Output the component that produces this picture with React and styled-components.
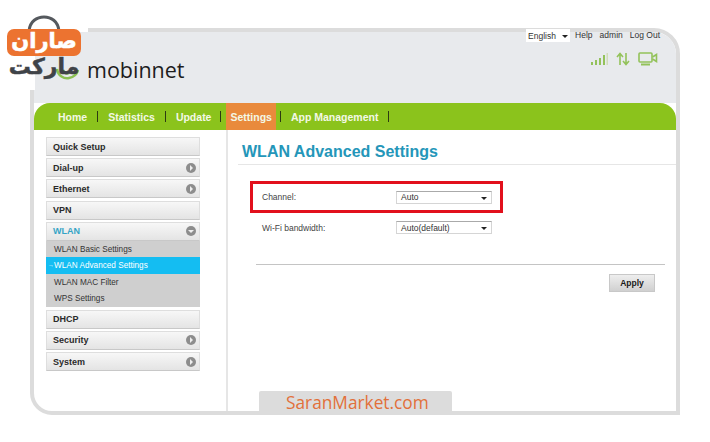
import React from 'react';
import styled, { createGlobalStyle } from 'styled-components';

const GlobalStyle = createGlobalStyle`
    html, body {
        margin: 0;
        padding: 0;
        background: #fff;
    }
    body {
        font-family: "Liberation Sans", Arial, sans-serif;
    }
`

const Page = styled.div`
    position: relative;
    width: 710px;
    height: 442px;
    padding: 28px 30px 0;
    box-sizing: border-box;
    overflow: hidden;
`

const Frame = styled.div`
    width: 650px;
    height: 387px;
    box-sizing: border-box;
    border: 4px solid #dcdcdc;
    border-radius: 0 26px 0 22px;
    display: flex;
    flex-direction: column;
    background: #fff;
`

const Header = styled.header`
    height: 71px;
    background: #e8eaed;
    border-top-right-radius: 22px;
    display: flex;
    flex-direction: column;
    flex-shrink: 0;
`

const TopBar = styled.div`
    display: flex;
    justify-content: flex-end;
    align-items: flex-start;
    gap: 7px;
    height: 20px;
    padding-right: 16px;
    font-size: 8.5px;
    color: #333;
`

const TopLink = styled.span`
    line-height: 11px;
    margin-top: -2px;
`

const LangSelect = styled.div`
    width: 44px;
    height: 13px;
    background: #fff;
    margin: -3px -2px 0 0;
    display: flex;
    align-items: center;
    justify-content: space-between;
    padding: 0 2px;
    box-sizing: border-box;
`

const Caret = styled.i`
    width: 0;
    height: 0;
    border-left: 3px solid transparent;
    border-right: 3px solid transparent;
    border-top: 3px solid #222;
    margin-top: 2px;
`

const StatusRow = styled.div`
    display: flex;
    justify-content: flex-end;
    gap: 8px;
    padding-right: 18px;
    height: 16px;
`

const Brand = styled.div`
    font-family: "Open Sans", "Noto Sans", sans-serif;
    font-size: 21.5px;
    font-weight: 500;
    color: #1d1d1d;
    line-height: 24px;
    padding-left: 53px;
    margin-top: -10px;
`

const Nav = styled.nav`
    height: 27px;
    background: #8bc31c;
    border-radius: 16px 16px 0 0;
    display: flex;
    align-items: center;
    padding-left: 24px;
    flex-shrink: 0;
    font-size: 10.5px;
    font-weight: bold;
    color: #f3f8e6;
`

const NavItem = styled.span`
    height: 100%;
    display: flex;
    align-items: center;
    padding: 0 ${props => props.$active ? '4px' : '0'};
    background: ${props => props.$active ? '#e98a3c' : 'transparent'};
`

const NavSep = styled.span`
    width: 1px;
    height: 11px;
    background: #2d3a12;
    margin-left: ${props => props.$left || 10}px;
    margin-right: ${props => props.$right || 10}px;
`

const Body = styled.div`
    flex: 1;
    display: flex;
    min-height: 0;
`

const Sidebar = styled.aside`
    width: 194px;
    box-sizing: border-box;
    border-right: 2px solid #e6e6e6;
    padding: 7px 0 0 12px;
    flex-shrink: 0;
`

const Menu = styled.div`
    width: 154px;
    display: flex;
    flex-direction: column;
`

const MenuItem = styled.div`
    height: 19px;
    margin-bottom: ${props => props.$open ? '0' : '2.2px'};
    box-sizing: border-box;
    padding: 0 3px 0 6px;
    display: flex;
    align-items: center;
    justify-content: space-between;
    background: linear-gradient(#f7f7f7, #e4e4e4);
    border: 1px solid #dedede;
    border-bottom-color: #c8c8c8;
    font-size: 9px;
    font-weight: bold;
    color: ${props => props.$open ? '#35a4c6' : '#2a2a2a'};
`

const Bullet = styled.span`
    width: 10px;
    height: 10px;
    border-radius: 50%;
    background: #8d8d8d;
    display: flex;
    align-items: center;
    justify-content: center;
    &::after {
        content: '';
        ${props => props.$open
            ? `width: 0; height: 0; border-left: 3px solid transparent; border-right: 3px solid transparent; border-top: 3px solid #eee;`
            : `width: 0; height: 0; border-top: 3px solid transparent; border-bottom: 3px solid transparent; border-left: 3px solid #eee; margin-left: 1px;`}
    }
`

const SubMenu = styled.div`
    background: #cfcfcf;
    margin-bottom: 3px;
    display: flex;
    flex-direction: column;
`

const SubItem = styled.div`
    height: ${props => props.$active ? '17px' : '16.3px'};
    line-height: 17px;
    padding-left: ${props => props.$active ? '2px' : '8px'};
    font-size: 8.2px;
    color: ${props => props.$active ? '#fff' : '#333'};
    background: ${props => props.$active ? '#14bdf2' : 'transparent'};
    display: flex;
`

const SubArrow = styled.span`
    width: 6px;
    font-size: 6px;
`

const Content = styled.main`
    flex: 1;
    padding-top: 12px;
`

const Title = styled.h1`
    margin: 0 0 0 14px;
    font-size: 16px;
    line-height: 20px;
    font-weight: bold;
    color: #2496b9;
`

const TitleRule = styled.div`
    height: 1px;
    background: #e6e6e6;
    margin: 2px 0 16px 10px;
`

const Form = styled.div`
    margin-left: 22px;
    width: 253px;
`

const Row = styled.div`
    display: flex;
    align-items: center;
    box-sizing: border-box;
    height: ${props => props.$marked ? '32px' : '29px'};
    padding-left: ${props => props.$marked ? '9px' : '12px'};
    border: ${props => props.$marked ? '3px solid #e2101c' : '0'};
    font-size: 8.5px;
    color: #444;
`

const RowLabel = styled.span`
    width: 134px;
    flex-shrink: 0;
`

const Select = styled.div`
    width: 96px;
    height: 13px;
    box-sizing: border-box;
    border: 1px solid #d5d5d5;
    border-top-color: #aaa;
    background: #fff;
    padding: 0 4px;
    display: flex;
    align-items: center;
    justify-content: space-between;
    color: #333;
`

const Divider = styled.div`
    height: 1px;
    background: #c4c4c4;
    margin: 22px 11px 0 28px;
`

const Actions = styled.div`
    display: flex;
    justify-content: flex-end;
    padding: 9px 21px 0 0;
`

const ApplyButton = styled.button`
    width: 46px;
    height: 18px;
    padding: 0;
    border: 1px solid #c8c8c8;
    background: linear-gradient(#eeeeee, #d0d0d0);
    font-family: inherit;
    font-size: 8.5px;
    font-weight: bold;
    color: #1a1a1a;
`

const Watermark = styled.div`
    position: absolute;
    left: 259px;
    top: 391px;
    width: 193px;
    height: 24px;
    background: #dcdcdc;
    border-radius: 2px 2px 0 0;
    padding-left: 27px;
    box-sizing: border-box;
    font-family: "Open Sans", "Noto Sans", sans-serif;
    font-size: 17.3px;
    line-height: 24px;
    color: #e2703a;
`

const LogoMask = styled.div`
    position: absolute;
    left: 0;
    top: 0;
    width: 88px;
    height: 32px;
    background: #fff;
    &::after {
        content: '';
        position: absolute;
        left: 0;
        top: 32px;
        width: 35px;
        height: 58px;
        background: #fff;
    }
`

const Logo = styled.div`
    position: absolute;
    left: 7px;
    top: 15px;
    width: 76px;
    height: 66px;
`

const LogoBag = styled.svg`
    position: absolute;
    left: 19px;
    top: 0;
`

const LogoPlate = styled.div`
    position: absolute;
    left: 0;
    top: 14px;
    width: 74px;
    height: 27px;
    border-radius: 7px;
    background: #ec7330;
    color: #fff;
    font-family: "DejaVu Sans", sans-serif;
    font-weight: bold;
    font-size: 21px;
    line-height: 24px;
    text-align: center;
    -webkit-text-stroke: 0.6px #fff;
    overflow: hidden;
`

const LogoSwirl = styled.svg`
    position: absolute;
    left: 47px;
    top: 46px;
`

const LogoWord = styled.div`
    position: absolute;
    left: 0;
    top: 40px;
    width: 74px;
    font-family: "DejaVu Sans", sans-serif;
    font-weight: bold;
    font-size: 22px;
    line-height: 24px;
    text-align: center;
    color: #3f4348;
    -webkit-text-stroke: 0.5px #3f4348;
`

const SignalIcon = () => (
    <svg width="17" height="14" viewBox="0 0 17 14">
        <g fill="#93c25a">
            <rect x="0" y="10" width="2" height="3" />
            <rect x="4" y="8" width="2" height="5" />
            <rect x="8" y="6" width="2" height="7" />
            <rect x="12" y="3" width="2" height="10" />
        </g>
        <rect x="15.5" y="1" width="1.5" height="12" fill="#cfdcb8" />
    </svg>
)

const ArrowsIcon = () => (
    <svg width="14" height="14" viewBox="0 0 14 14" fill="none" stroke="#93c25a" strokeWidth="1.6">
        <path d="M4 13V2M1 5l3-3.5L7 5" />
        <path d="M10 1v11M7 9l3 3.5L13 9" />
    </svg>
)

const DeviceIcon = () => (
    <svg width="20" height="14" viewBox="0 0 20 14" fill="none" stroke="#93c25a" strokeWidth="1.6">
        <rect x="1" y="1" width="13" height="9" rx="1" />
        <path d="M14.5 5l4-2.5v7l-4-2.5" />
        <path d="M3 12.5h9" strokeWidth="2" />
    </svg>
)

const menuBefore = [
    { label: 'Quick Setup' },
    { label: 'Dial-up', more: true },
    { label: 'Ethernet', more: true },
    { label: 'VPN' },
]

const wlanItems = ['WLAN Basic Settings', 'WLAN Advanced Settings', 'WLAN MAC Filter', 'WPS Settings']

const menuAfter = [
    { label: 'DHCP' },
    { label: 'Security', more: true },
    { label: 'System', more: true },
]

const renderItem = item => (
    <MenuItem key={item.label}>
        {item.label}
        {item.more && <Bullet />}
    </MenuItem>
)

const App = () => {
    return (
        <Page>
            <GlobalStyle />
            <Frame>
                <Header>
                    <TopBar>
                        <LangSelect>English <Caret /></LangSelect>
                        <TopLink>Help</TopLink>
                        <TopLink>admin</TopLink>
                        <TopLink>Log Out</TopLink>
                    </TopBar>
                    <StatusRow>
                        <SignalIcon />
                        <ArrowsIcon />
                        <DeviceIcon />
                    </StatusRow>
                    <Brand>mobinnet</Brand>
                </Header>
                <Nav>
                    <NavItem>Home</NavItem>
                    <NavSep />
                    <NavItem>Statistics</NavItem>
                    <NavSep />
                    <NavItem>Update</NavItem>
                    <NavSep $left={9} $right={5} />
                    <NavItem $active>Settings</NavItem>
                    <NavSep $left={4} />
                    <NavItem>App Management</NavItem>
                    <NavSep />
                </Nav>
                <Body>
                    <Sidebar>
                        <Menu>
                            {menuBefore.map(renderItem)}
                            <MenuItem $open>WLAN<Bullet $open /></MenuItem>
                            <SubMenu>
                                {wlanItems.map((label, i) => (
                                    <SubItem key={label} $active={i === 1}>
                                        {i === 1 && <SubArrow>→</SubArrow>}
                                        {label}
                                    </SubItem>
                                ))}
                            </SubMenu>
                            {menuAfter.map(renderItem)}
                        </Menu>
                    </Sidebar>
                    <Content>
                        <Title>WLAN Advanced Settings</Title>
                        <TitleRule />
                        <Form>
                            <Row $marked>
                                <RowLabel>Channel:</RowLabel>
                                <Select>Auto <Caret /></Select>
                            </Row>
                            <Row>
                                <RowLabel>Wi-Fi bandwidth:</RowLabel>
                                <Select>Auto(default) <Caret /></Select>
                            </Row>
                        </Form>
                        <Divider />
                        <Actions>
                            <ApplyButton>Apply</ApplyButton>
                        </Actions>
                    </Content>
                </Body>
            </Frame>
            <Watermark>SaranMarket.com</Watermark>
            <LogoMask />
            <Logo>
                <LogoBag width="36" height="18" viewBox="0 0 36 18" fill="none">
                    <path d="M3 16C4 6 11 2 18 2s14 4 15 14" stroke="#55595e" strokeWidth="3" />
                </LogoBag>
                <LogoPlate>صاران</LogoPlate>
                <LogoSwirl width="28" height="20" viewBox="0 0 28 20" fill="none" stroke="#8cc152" strokeWidth="2.5">
                    <path d="M3 8c1 7 7 10 12 9s8-4 9-8" />
                    <path d="M9 9c1 3 4 4 6 3" />
                </LogoSwirl>
                <LogoWord>مارکت</LogoWord>
            </Logo>
        </Page>
    )
}

export default App
